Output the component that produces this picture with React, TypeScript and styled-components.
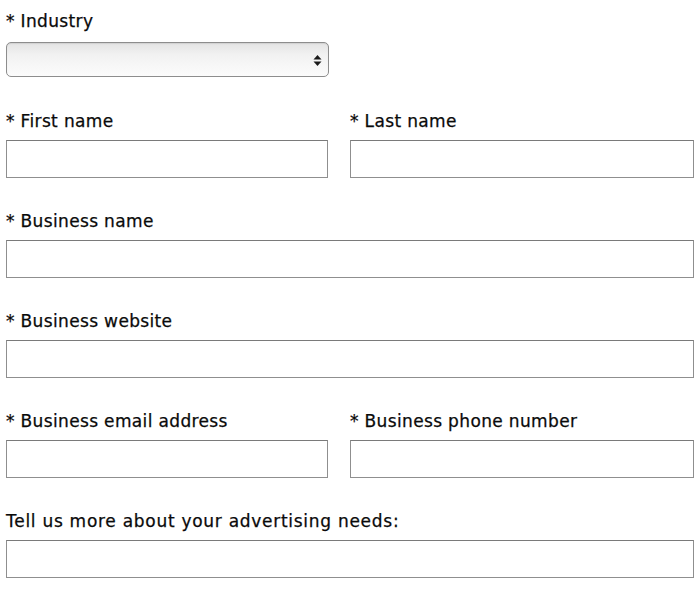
import styled, { createGlobalStyle } from 'styled-components';

const GlobalStyle = createGlobalStyle`
  html, body {
    margin: 0;
    padding: 0;
    background: #ffffff;
  }
`;

const Form = styled.form`
  width: 688px;
  padding: 12px 0 0 6px;
  display: flex;
  flex-direction: column;
  gap: 34px;
  font-family: 'DejaVu Sans', 'Liberation Sans', sans-serif;
  color: #0a0a0a;
`;

const Row = styled.div<{ $split?: boolean }>`
  display: grid;
  grid-template-columns: ${(p) => (p.$split ? '322px 344px' : '1fr')};
  column-gap: 22px;
`;

const Field = styled.div<{ $gap?: number; $extra?: number }>`
  display: flex;
  flex-direction: column;
  gap: ${(p) => p.$gap ?? 10}px;
  padding-bottom: ${(p) => p.$extra ?? 0}px;
`;

const Label = styled.label<{ $tracking?: number }>`
  font-size: 17px;
  line-height: 18px;
  letter-spacing: ${(p) => p.$tracking ?? 0.35}px;
  white-space: nowrap;
  -webkit-text-stroke: 0.25px #0a0a0a;
`;

const TextInput = styled.input`
  box-sizing: border-box;
  height: 38px;
  width: 100%;
  margin: 0;
  border: 1px solid #8f8f8f;
  border-top-color: #7a7a7a;
  background: #ffffff;
  font: inherit;
`;

const SelectBox = styled.div`
  box-sizing: border-box;
  position: relative;
  width: 323px;
  height: 35px;
  border: 1px solid #8d8d8d;
  border-radius: 5px;
  background: linear-gradient(#e4e4e4 0%, #f1f1f1 35%, #f7f7f7 70%, #fbfbfb 100%);
  box-shadow: inset 0 1px 1px rgba(0, 0, 0, 0.08);
`;

const Arrows = styled.svg`
  position: absolute;
  right: 6px;
  top: 12px;
`;

export default function App() {
  return (
    <>
      <GlobalStyle />
      <Form>
        <Field $gap={12} $extra={1}>
          <Label>* Industry</Label>
          <SelectBox>
            <Arrows width="9" height="11" viewBox="0 0 9 11">
              <path d="M4.5 0 L8.5 4.5 L0.5 4.5 Z" fill="#1a1a1a" />
              <path d="M0.5 6.5 L8.5 6.5 L4.5 11 Z" fill="#1a1a1a" />
            </Arrows>
          </SelectBox>
        </Field>
        <Row $split>
          <Field>
            <Label>* First name</Label>
            <TextInput />
          </Field>
          <Field>
            <Label>* Last name</Label>
            <TextInput />
          </Field>
        </Row>
        <Row>
          <Field>
            <Label>* Business name</Label>
            <TextInput />
          </Field>
        </Row>
        <Row>
          <Field>
            <Label>* Business website</Label>
            <TextInput />
          </Field>
        </Row>
        <Row $split>
          <Field>
            <Label>* Business email address</Label>
            <TextInput />
          </Field>
          <Field>
            <Label>* Business phone number</Label>
            <TextInput />
          </Field>
        </Row>
        <Row>
          <Field>
            <Label $tracking={0.72}>Tell us more about your advertising needs:</Label>
            <TextInput />
          </Field>
        </Row>
      </Form>
    </>
  );
}
